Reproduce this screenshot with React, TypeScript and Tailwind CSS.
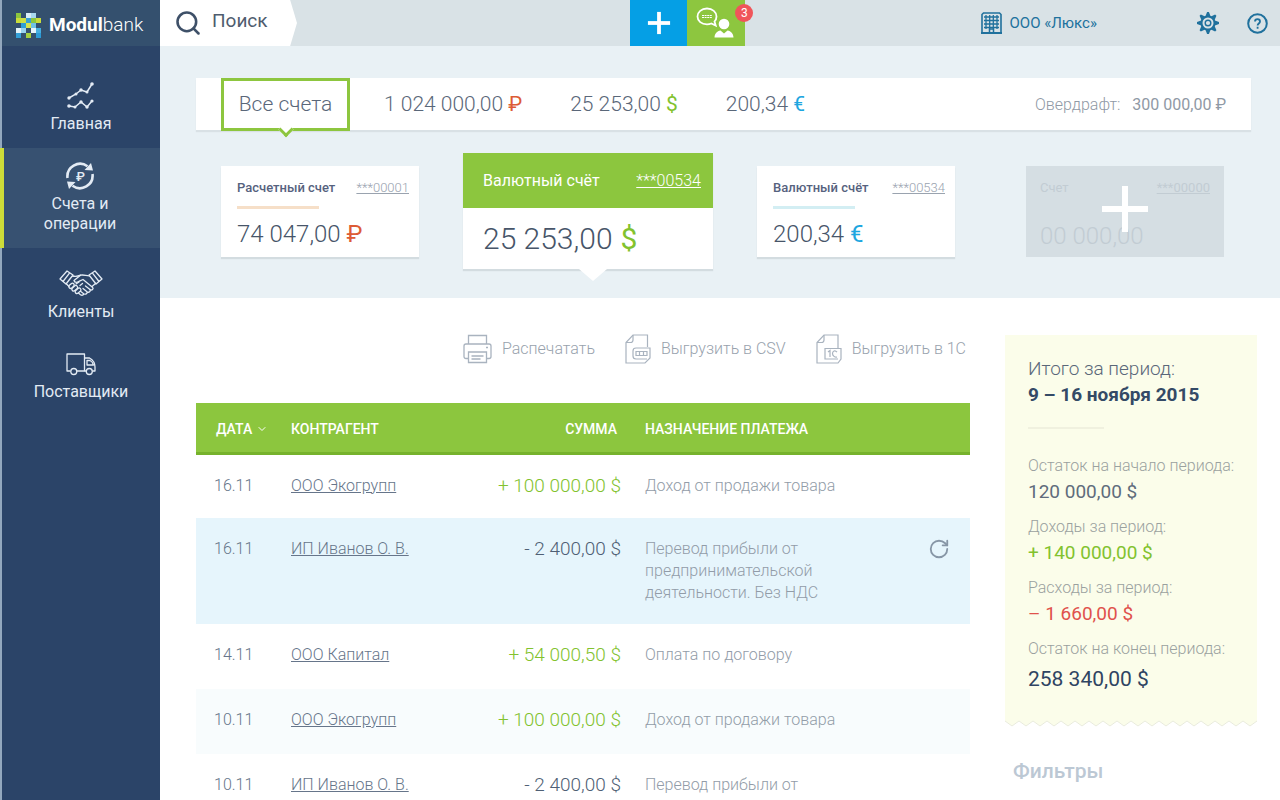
import type { ReactNode } from "react";
import { ChevronDown, Plus, RotateCw, Search } from "lucide-react";

interface Account {
  name: string;
  number: string;
  amount: string;
  sign: string;
  signColor: string;
  line: string;
}

interface Operation {
  date: string;
  partner: string;
  amount: string;
  income: boolean;
  purpose: string;
  rowColor?: string;
  repeatable?: boolean;
}

const logoColors = [
  ["#8cc63f", "#34506e", "#d9eef7", "#a8d8ee", "#34506e"],
  ["#c9dc3a", "#cfdf45", "#3a9fd0", "#8cc63f", "#c9dc3a"],
  ["#34506e", "#2f9fd6", "#d7e24a", "#6fc1e6", "#34506e"],
  ["#e6f4fa", "#9ad3ee", "#34506e", "#e6f4fa", "#46aede"],
  ["#34a0d8", "#34506e", "#a5cf3f", "#34506e", "#2c9bd6"],
];

const totals = [
  { text: "1 024 000,00", sign: "₽", signColor: "text-[#dd5b35]" },
  { text: "25 253,00", sign: "$", signColor: "text-[#82c22e]" },
  { text: "200,34", sign: "€", signColor: "text-[#1ea6e0]" },
];

const rubAccount: Account = {
  name: "Расчетный счет",
  number: "***00001",
  amount: "74 047,00",
  sign: "₽",
  signColor: "text-[#dd5b35]",
  line: "bg-[#f6dfc8]",
};

const euroAccount: Account = {
  name: "Валютный счёт",
  number: "***00534",
  amount: "200,34",
  sign: "€",
  signColor: "text-[#1ea6e0]",
  line: "bg-[#d3eef3]",
};

const operations: Operation[] = [
  { date: "16.11", partner: "ООО Экогрупп", amount: "+ 100 000,00 $", income: true, purpose: "Доход от продажи товара" },
  {
    date: "16.11",
    partner: "ИП Иванов О. В.",
    amount: "- 2 400,00 $",
    income: false,
    purpose: "Перевод прибыли от предпринимательской деятельности. Без НДС",
    rowColor: "bg-[#e6f5fc]",
    repeatable: true,
  },
  { date: "14.11", partner: "ООО Капитал", amount: "+ 54 000,50 $", income: true, purpose: "Оплата по договору" },
  {
    date: "10.11",
    partner: "ООО Экогрупп",
    amount: "+ 100 000,00 $",
    income: true,
    purpose: "Доход от продажи товара",
    rowColor: "bg-[#f8fcfd]",
  },
  {
    date: "10.11",
    partner: "ИП Иванов О. В.",
    amount: "- 2 400,00 $",
    income: false,
    purpose: "Перевод прибыли от предпринимательской деятельности. Без НДС",
  },
];

const summary = [
  { label: "Остаток на начало периода:", value: "120 000,00 $", valueClass: "text-[19px] text-[#5f6c7c]" },
  { label: "Доходы за период:", value: "+ 140 000,00 $", valueClass: "text-[19px] text-[#82c22e]" },
  { label: "Расходы за период:", value: "– 1 660,00 $", valueClass: "text-[19px] text-[#e0524c]" },
  { label: "Остаток на конец периода:", value: "258 340,00 $", valueClass: "pt-1 text-[21px] text-[#2f4462]" },
];

const Logo = () => (
  <svg width="25" height="25" viewBox="0 0 25 25" aria-hidden="true">
    {logoColors.map((row, y) => row.map((fill, x) => <rect key={`${x}-${y}`} x={x * 5} y={y * 5} width="5" height="5" fill={fill} />))}
  </svg>
);

const ChartIcon = () => (
  <svg width="28" height="28" viewBox="0 0 28 28" fill="none" stroke="currentColor" strokeWidth="1.5" aria-hidden="true">
    <path d="M2 16 9 12 14 8 20 10 25 2" />
    <path d="M2 24 8 25 14 20 20 25 25 19" />
    <g fill="currentColor" stroke="none">
      <circle cx="2" cy="16" r="1.7" />
      <circle cx="9" cy="12" r="1.5" />
      <circle cx="14" cy="8" r="1.7" />
      <circle cx="20" cy="10" r="1.5" />
      <circle cx="25" cy="2" r="1.8" />
      <circle cx="2" cy="24" r="1.8" />
      <circle cx="8" cy="25" r="1.5" />
      <circle cx="14" cy="20" r="1.7" />
      <circle cx="20" cy="25" r="1.7" />
      <circle cx="25" cy="19" r="1.6" />
    </g>
  </svg>
);

const AccountsIcon = () => (
  <svg width="30" height="30" viewBox="0 0 30 30" fill="none" stroke="currentColor" strokeWidth="2.6" aria-hidden="true">
    <path d="M2.500 17A12.700 12.700 0 0 1 22.500 5.200" />
    <path d="M27.500 13A12.700 12.700 0 0 1 7.500 24.800" />
    <path d="M19.500 9 28 9.500 26 2z M10.500 21 2 20.500 4 28z" fill="currentColor" stroke="none" />
    <text x="15.5" y="19.5" textAnchor="middle" fontSize="13" fontWeight="500" fill="currentColor" stroke="none">
      ₽
    </text>
  </svg>
);

const ClientsIcon = () => (
  <svg width="44" height="28" viewBox="0 0 44 28" fill="none" stroke="currentColor" strokeWidth="1.3" strokeLinejoin="round" strokeLinecap="round" aria-hidden="true">
    <path d="M8 1 1 9l6 5 7-9z M10.500 3.200 4 11.500" />
    <path d="M36 1l7 8-6 5-7-9z M33.500 3.200 40 11.500" />
    <path d="M13.500 6c3 .8 5 .6 8-.8 3-.9 6 .8 9 .6" />
    <path d="M21.500 5.200 15 10.500c.5 2.500 3.500 2.500 6 .3l3-1.300 9.500 7.700c1.500 1.800-.5 3.600-2.500 2.300l-4.500-3.500" />
    <path d="M36.500 13.500 33 16.500" />
    <path d="M7.500 14l2.500 2.500" />
    <path d="M31 19.500c1 2-1 3.500-3 2.300l-4-3.300M28 21.800c.5 2-1.500 3-3.300 2l-3.200-2.500M24.700 23.800c-.2 1.700-2 1.800-3.200.9l-2-1.600" />
    <rect x="9.500" y="14" width="6" height="3.600" rx="1.800" transform="rotate(-42 12.500 15.800)" />
    <rect x="12.500" y="16.500" width="6.500" height="3.600" rx="1.800" transform="rotate(-42 15.700 18.300)" />
    <rect x="15.800" y="19" width="6.500" height="3.600" rx="1.800" transform="rotate(-42 19 20.800)" />
    <path d="M17 14l3-2 M21 15.500l2.500-2" />
  </svg>
);

const TruckIcon = () => (
  <svg width="30" height="24" viewBox="0 0 30 24" fill="none" stroke="currentColor" strokeWidth="1.3" strokeLinejoin="round" aria-hidden="true">
    <path d="M4.500 19H1V2h17.500v17H11" />
    <path d="M18.500 6h5c3.500 2 5.500 5.500 5.500 9v4h-2.500 M18.500 19h1.500" />
    <path d="M21 8.500v4.500h6.500c-.5-2-1.800-3.700-3.500-4.500z" />
    <circle cx="7.800" cy="19.500" r="3" />
    <circle cx="23.300" cy="19.500" r="3" />
  </svg>
);

const ChatIcon = () => (
  <svg width="40" height="32" viewBox="0 0 40 32" fill="none" aria-hidden="true">
    <path d="M11 1.500c5.500 0 9.500 3.500 9.500 8 0 2-.7 3.600-2 5l1.200 4-4.400-2c-1.300.6-2.800.9-4.300.9-5.500 0-9.500-3.400-9.500-7.900s4-8 9.500-8z" stroke="#fff" strokeWidth="1.8" />
    <path d="M6 8.500h10M6 10.500h10" stroke="#fff" strokeWidth="1.2" strokeDasharray="2 .6" />
    <circle cx="28" cy="17" r="5.300" fill="#fff" />
    <path d="M18.500 30.500c.2-4 2.500-6.300 6-7l3.500 3 3.500-3c3.500.7 5.800 3 6 7z" fill="#fff" />
  </svg>
);

const BuildingIcon = () => (
  <svg width="21" height="22" viewBox="0 0 21 22" fill="none" stroke="currentColor" aria-hidden="true">
    <path d="M1 21V2.500L2.500 1h16L20 2.500V21" strokeWidth="1.600" />
    <path d="M0 21h21" strokeWidth="2" />
    <path d="M5 3v14M8.700 3v14M12.300 3v14M16 3v14M3 5h15M3 8.500h15M3 12h15M3 15.500h15" strokeWidth="1.300" />
    <path d="M8.500 20v-3h4v3" strokeWidth="1.500" />
  </svg>
);

const GearIcon = () => (
  <svg width="22" height="22" viewBox="0 0 22 22" fill="none" stroke="currentColor" aria-hidden="true">
    <circle cx="11" cy="11" r="6.500" strokeWidth="2" />
    <circle cx="11" cy="11" r="2.800" strokeWidth="1.400" />
    <g fill="currentColor" stroke="none">
      {[0, 45, 90, 135, 180, 225, 270, 315].map((angle) => (
        <path key={angle} d="M8.200 4.800 10.100 0h1.800l1.900 4.800z" transform={`rotate(${angle} 11 11)`} />
      ))}
    </g>
  </svg>
);

const HelpIcon = () => (
  <svg width="21" height="21" viewBox="0 0 21 21" fill="none" stroke="currentColor" aria-hidden="true">
    <circle cx="10.500" cy="10.500" r="9.300" strokeWidth="2" />
    <path d="M8 8.500c0-3.200 5-3.200 5 0 0 2-2.400 2-2.400 4M10.600 13.800v2" strokeWidth="1.800" />
  </svg>
);

const PrinterIcon = () => (
  <svg width="29" height="30" viewBox="0 0 29 30" fill="none" stroke="currentColor" strokeWidth="1.300" aria-hidden="true">
    <path d="M5.500 10V1.500h18V10" />
    <path d="M5.500 24.500H3c-1.200 0-2-.8-2-2V12c0-1.200.8-2 2-2h23c1.200 0 2 .8 2 2v10.500c0 1.200-.8 2-2 2h-2.500" />
    <path d="M5.500 18h18v10.500h-18z" />
    <path d="M8.500 22h12M8.500 25h9M23 13.500h2" strokeWidth="1.600" />
  </svg>
);

const CsvIcon = () => (
  <svg width="26" height="30" viewBox="0 0 26 30" fill="none" stroke="currentColor" strokeWidth="1.200" aria-hidden="true">
    <path d="M22.500 13V1H8L1 8.500V29h19l5-5V14H11c-2 0-3 1-3 3v5c0 2 1 3 3 3h11" />
    <path d="M8 1v5c0 1.500-1 2.500-2.500 2.500H1" />
    <path d="M11 17.500h11v4H11zM14.500 17.500v4M18.500 17.500v4" />
  </svg>
);

const OneCIcon = () => (
  <svg width="26" height="30" viewBox="0 0 26 30" fill="none" stroke="currentColor" strokeWidth="1.200" aria-hidden="true">
    <path d="M22 14V1H8L1 8.500V29h21l3-4V14.500H9V25h13" />
    <path d="M8 1v5c0 1.500-1 2.500-2.500 2.500H1" />
    <path d="M12 18l2-1.500V23M21 18.200c-2-2.500-4.500-1-4.500 1.300 0 2.500 2.500 4 4.500 3.500" />
  </svg>
);

const NavItem = ({ icon, label, active = false }: { icon: ReactNode; label: string; active?: boolean }) => (
  <a
    href="#"
    aria-current={active ? "page" : undefined}
    className={`flex flex-col items-center gap-0.5 pt-3 pb-3.5 text-center text-base leading-5 text-[#e3ebf4] ${
      active ? "mb-2 -ml-0.5 border-l-4 border-[#cddc39] bg-[#375171] pr-1" : ""
    }`}
  >
    <span className="flex h-8 items-center">{icon}</span>
    <span className="w-28">{label}</span>
  </a>
);

const AccountCard = ({ account }: { account: Account }) => (
  <article className="w-[198px] bg-white px-4 pt-3 pb-2 shadow-[0_2px_1px_#d3dce0]">
    <div className="-mr-2 flex items-center justify-between pr-0.5 leading-5">
      <h2 className="text-[13px] font-medium text-[#56627e]">{account.name}</h2>
      <a href="#" className="text-[13px] font-light text-[#9aa3af] underline">
        {account.number}
      </a>
    </div>
    <div className={`mt-2 h-[3px] w-[82px] ${account.line}`} />
    <p className="mt-2.5 text-2xl leading-[30px] font-light text-[#475569]">
      {account.amount} <span className={`font-normal ${account.signColor}`}>{account.sign}</span>
    </p>
  </article>
);

const ToolbarButton = ({ icon, label }: { icon: ReactNode; label: string }) => (
  <button type="button" className="flex h-[30px] items-center gap-2.5 text-base font-light text-[#98a2ad]">
    <span className="text-[#a9b3bf]">{icon}</span>
    {label}
  </button>
);

const Sidebar = () => (
  <aside className="w-40 shrink-0 border-l-2 border-[#93a8bd] bg-[#2b4468]">
    <a href="#" className="flex h-[46px] items-center gap-2 bg-[#34506e] pt-1 pl-3.5 text-[19px] text-white">
      <Logo />
      <span className="font-bold">
        Modul<span className="font-light">bank</span>
      </span>
    </a>
    <nav className="pt-[22px]">
      <NavItem icon={<ChartIcon />} label="Главная" />
      <NavItem icon={<AccountsIcon />} label="Счета и операции" active />
      <NavItem icon={<ClientsIcon />} label="Клиенты" />
      <NavItem icon={<TruckIcon />} label="Поставщики" />
    </nav>
  </aside>
);

const Header = () => (
  <header className="flex h-[46px] bg-[#d9e2e6]">
    <div className="w-[42%]">
      <label className="flex h-full w-[137px] items-center gap-2.5 bg-white pl-3.5 [clip-path:polygon(0_0,95%_0,100%_50%,95%_100%,0_100%)]">
        <Search className="size-7 shrink-0 text-[#3e5068]" strokeWidth={2.2} aria-hidden="true" />
        <input type="search" aria-label="Поиск" placeholder="Поиск" className="mb-1 w-20 text-[19px] text-[#4f5c6e] outline-none placeholder:text-[#4f5c6e]" />
      </label>
    </div>
    <button type="button" aria-label="Создать" className="flex w-[57px] items-center justify-center bg-[#059fe5] text-white">
      <Plus className="size-[38px]" strokeWidth={2.4} strokeLinecap="butt" />
    </button>
    <button type="button" aria-label="Сообщения" className="relative flex w-[58px] items-center justify-center bg-[#8dc63f]">
      <ChatIcon />
      <span className="absolute top-1 -right-2 flex size-[18px] items-center justify-center rounded-full bg-[#f0555a] text-xs text-white">3</span>
    </button>
    <div className="ml-auto flex items-center gap-7 pr-3 text-[#20719d]">
      <button type="button" className="mr-[72px] flex items-center gap-2">
        <BuildingIcon />
        <span className="text-[15px]">ООО «Люкс»</span>
      </button>
      <button type="button" aria-label="Настройки">
        <GearIcon />
      </button>
      <button type="button" aria-label="Помощь">
        <HelpIcon />
      </button>
    </div>
  </header>
);

const Accounts = () => (
  <section className="bg-[#e9f1f5] pt-8 pr-[29px] pb-[29px] pl-9">
    <div className="flex h-[52px] items-center bg-white pr-[25px] pl-[25px] text-[#5a6779] shadow-[0_2px_1px_#d9e1e5]">
      <button type="button" className="relative h-[53px] w-[129px] shrink-0 border-[3px] border-[#8dc63f] bg-white pt-0.5 text-[21px] font-light">
        Все счета
        <span className="absolute -bottom-[7px] left-1/2 size-[11px] -translate-x-1/2 rotate-45 border-r-[3px] border-b-[3px] border-[#8dc63f] bg-white" />
      </button>
      <div className="ml-[34px] flex gap-12 pt-0.5 text-[21px] font-light">
        {totals.map((total) => (
          <button type="button" key={total.sign}>
            {total.text} <span className={`font-normal ${total.signColor}`}>{total.sign}</span>
          </button>
        ))}
      </div>
      <p className="ml-auto flex gap-3 pt-0.5 text-base font-light text-[#8f99a5]">
        <span>Овердрафт:</span>
        <span className="font-normal">300 000,00 ₽</span>
      </p>
    </div>
    <div className="mt-[23px] flex items-center gap-11 pr-[27px] pl-[25px]">
      <AccountCard account={rubAccount} />
      <article className="relative w-[250px] bg-white shadow-[0_2px_1px_#d3dce0]">
        <div className="flex h-[55px] items-center justify-between bg-[#8cc63e] pr-3 pl-5 text-white">
          <h2 className="text-base">Валютный счёт</h2>
          <a href="#" className="text-base font-light underline">
            ***00534
          </a>
        </div>
        <p className="flex h-[61px] items-center gap-2 px-5 text-3xl font-light text-[#475569]">
          25 253,00 <span className="font-normal text-[#82c22e]">$</span>
        </p>
        <span className="absolute top-full left-[52%] h-3 w-7 -translate-x-1/2 bg-white [clip-path:polygon(0_0,100%_0,50%_100%)]" />
      </article>
      <AccountCard account={euroAccount} />
      <button type="button" aria-label="Добавить счет" className="relative ml-auto h-[91px] w-[198px] bg-[#d5dee3] px-3.5 pt-3 pb-1 text-left text-[#c2ccd3]">
        <span className="flex justify-between text-[13px] leading-5">
          <span>Счет</span>
          <span className="underline">***00000</span>
        </span>
        <span className="mt-[22px] block text-2xl font-light">00 000,00</span>
        <svg className="absolute top-5 left-1/2 -translate-x-1/2" width="46" height="46" viewBox="0 0 46 46" aria-hidden="true">
          <path d="M23 0v46M0 23h46" stroke="#fff" strokeWidth="6" />
        </svg>
      </button>
    </div>
  </section>
);

const OperationsTable = () => (
  <table className="mt-[39px] w-full table-fixed text-left text-base leading-[22px]">
    <thead>
      <tr className="h-[50px] border-b-[3px] border-[#76b22c] bg-[#8cc63e] text-sm text-white">
        <th className="w-[95px] pt-1 pl-5 font-medium">
          <button type="button" className="flex items-center gap-1">
            ДАТА <ChevronDown className="size-3" aria-hidden="true" />
          </button>
        </th>
        <th className="pt-1 font-medium">КОНТРАГЕНТ</th>
        <th className="w-36 pt-1 pr-1 text-right font-medium">СУММА</th>
        <th className="w-[287px] pt-1 pl-6 font-medium">НАЗНАЧЕНИЕ ПЛАТЕЖА</th>
        <th className="w-[62px]" aria-label="Действия" />
      </tr>
    </thead>
    <tbody className="font-light text-[#66758a]">
      {operations.map((operation, index) => (
        <tr key={index} className={`h-[65px] align-top ${operation.rowColor ?? ""}`}>
          <td className="py-5 pl-[18px]">{operation.date}</td>
          <td className="py-5">
            <a href="#" className="underline">
              {operation.partner}
            </a>
          </td>
          <td className={`py-5 text-right text-[19px] leading-[22px] ${operation.income ? "text-[#82c22e]" : "text-[#4f5f75]"}`}>{operation.amount}</td>
          <td className="py-5 pr-14 pl-6 text-[#929ca8]">{operation.purpose}</td>
          <td className="py-5 pl-5">
            {operation.repeatable && (
              <button type="button" aria-label="Повторить платёж" className="block">
                <RotateCw className="size-[22px] text-[#8796a6]" strokeWidth={2} />
              </button>
            )}
          </td>
        </tr>
      ))}
    </tbody>
  </table>
);

const Summary = () => (
  <aside className="w-[252px] shrink-0 pt-[37px]">
    <div className="bg-[#fbfdea] px-[23px] pt-5 pb-7">
      <p className="text-[19px] leading-7 font-light text-[#5a6779]">Итого за период:</p>
      <h2 className="text-[19px] leading-6 font-bold text-[#344a66]">9 – 16 ноября 2015</h2>
      <div className="mt-5 h-0.5 w-[76px] bg-[#f0f1df]" />
      <dl className="mt-6 flex flex-col gap-[9px]">
        {summary.map((item) => (
          <div key={item.label}>
            <dt className="text-base leading-[26px] font-light whitespace-nowrap text-[#9aa19f]">{item.label}</dt>
            <dd className={`leading-[26px] ${item.valueClass}`}>{item.value}</dd>
          </div>
        ))}
      </dl>
    </div>
    <svg className="block w-full" height="8" aria-hidden="true">
      <defs>
        <pattern id="tear" width="14" height="8" patternUnits="userSpaceOnUse">
          <path d="M0 0v1l7 5 7-5V0z" fill="#fbfdea" />
          <path d="M0 1l7 5 7-5" fill="none" stroke="#e9ebdd" />
        </pattern>
      </defs>
      <rect width="100%" height="8" fill="url(#tear)" />
    </svg>
    <h2 className="mt-7 pl-2 text-[21px] font-medium text-[#bcc8d4]">Фильтры</h2>
  </aside>
);

const App = () => (
  <div className="flex h-screen overflow-hidden bg-white font-['Roboto',sans-serif]">
    <Sidebar />
    <div className="flex min-w-0 flex-1 flex-col">
      <Header />
      <main className="min-h-0 flex-1 overflow-y-auto [scrollbar-width:none]">
        <Accounts />
        <div className="flex gap-[35px] pr-[23px] pl-9">
          <section className="min-w-0 flex-1 pt-9">
            <div className="flex justify-end gap-[30px] pr-1">
              <ToolbarButton icon={<PrinterIcon />} label="Распечатать" />
              <ToolbarButton icon={<CsvIcon />} label="Выгрузить в CSV" />
              <ToolbarButton icon={<OneCIcon />} label="Выгрузить в 1С" />
            </div>
            <OperationsTable />
          </section>
          <Summary />
        </div>
      </main>
    </div>
  </div>
);

export default App;
